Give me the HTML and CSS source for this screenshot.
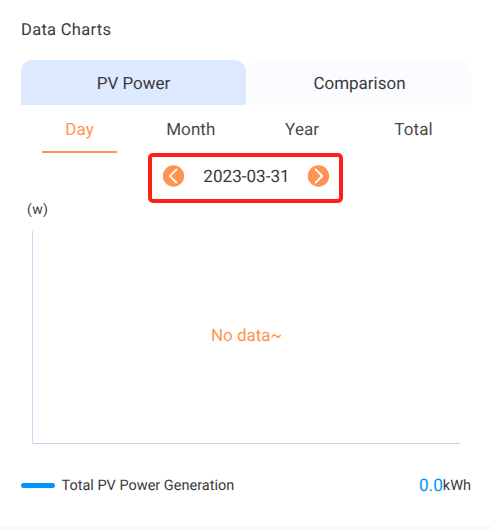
FILE: index.html
```html
<!DOCTYPE html>
<html lang="en">
<head>
<meta charset="utf-8">
<title>Data Charts</title>
<link rel="stylesheet" href="styles.css">
</head>
<body>
<main class="panel">
  <h1 class="title"><span>Data Charts</span></h1>
  <nav class="tabs">
    <a class="tab tab-active"><span>PV Power</span></a>
    <a class="tab"><span>Comparison</span></a>
  </nav>
  <nav class="periods">
    <a class="period period-active"><span>Day</span></a>
    <a class="period"><span>Month</span></a>
    <a class="period"><span>Year</span></a>
    <a class="period"><span>Total</span></a>
  </nav>
  <div class="date-picker">
    <svg class="arrow" viewBox="0 0 22 22"><circle cx="10.5" cy="11" r="10.7"/><path d="M14 4 6.8 11l7 7"/></svg>
    <span class="date">2023-03-31</span>
    <svg class="arrow" viewBox="0 0 22 22"><circle cx="10.5" cy="11" r="10.7"/><path d="M7.2 4l7 7-7 7"/></svg>
  </div>
  <section class="chart">
    <div class="unit"><span>(w)</span></div>
    <div class="plot"><span class="empty">No data~</span></div>
  </section>
  <footer class="legend">
    <i class="swatch"></i>
    <span class="label">Total PV Power Generation</span>
    <span class="value">0.0</span><span class="kwh">kWh</span>
  </footer>
</main>
</body>
</html>
```
FILE: styles.css
```css
* { box-sizing: border-box; }
body {
  margin: 0;
  background: #fff;
  color: #3a3a3c;
  font-family: Roboto, "Liberation Sans", sans-serif;
  text-rendering: geometricPrecision;
}
.panel {
  width: 491px;
  height: 529px;
  padding: 0 20px 0 21px;
  border-bottom: 3px solid #f8f8f8;
  overflow: hidden;
}
.title {
  display: flex;
  align-items: center;
  height: 60px;
  margin: 0;
  font-size: 16.5px;
  font-weight: 400;
  letter-spacing: 0.3px;
}
.tabs { display: flex; gap: 2px; height: 45px; }
.tab {
  display: flex;
  align-items: center;
  justify-content: center;
  width: 223px;
  padding-top: 2px;
  border-radius: 12px 12px 0 0;
  background: #fafcff;
  font-size: 17px;
}
.tab-active { width: 225px; background: #dce9ff; }
.periods {
  display: flex;
  justify-content: space-between;
  height: 48px;
  padding: 0 20px 0 21px;
}
.period {
  display: flex;
  align-items: center;
  justify-content: center;
  width: 75px;
  height: 48px;
  padding-top: 4px;
  border-bottom: 2px solid transparent;
  color: #4a4a4a;
  font-size: 17px;
  letter-spacing: 0.1px;
}
.period-active { border-color: #ff9351; color: #ff9351; }
.date-picker {
  display: flex;
  align-items: center;
  justify-content: space-between;
  width: 195px;
  height: 50px;
  margin-left: 127px;
  padding: 0 9px 4px 11px;
  border: 4px solid #fe2015;
  border-radius: 5px;
}
.arrow { width: 22px; height: 22px; }
.arrow circle { fill: #ff9351; }
.arrow path { fill: none; stroke: #fff; stroke-width: 1.8; }
.date { padding-top: 2px; font-size: 17.1px; }
.chart { padding: 0 11px; }
.unit {
  height: 28px;
  margin-left: -5px;
  font-size: 14px;
  letter-spacing: 0.4px;
  line-height: 15px;
}
.plot {
  display: flex;
  align-items: center;
  justify-content: center;
  height: 213px;
  padding-bottom: 3px;
  border-left: 1px solid #c9d7f3;
  border-bottom: 1px solid #c9d2ed;
  border-radius: 0 0 0 2px;
}
.empty { color: #ff9351; font-size: 17px; }
.legend { display: flex; align-items: center; height: 82px; }
.swatch {
  width: 34px;
  height: 5px;
  border-radius: 3px;
  background: #0094ff;
}
.label { margin-left: 6.5px; font-size: 14.5px; }
.value { margin-left: auto; padding-top: 1px; color: #0094ff; font-size: 17.2px; }
.kwh { font-size: 14.5px; }
```
